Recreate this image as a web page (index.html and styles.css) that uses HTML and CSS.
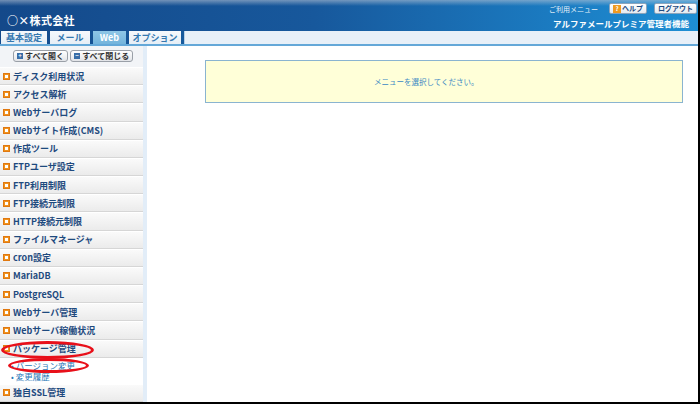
FILE: index.html
```html
<!DOCTYPE html>
<html lang="ja">
<head>
  <meta charset="UTF-8">
  <title>管理者機能</title>
  <link rel="stylesheet" href="styles.css">
</head>
<body>
<div class="page">

  <!-- header -->
  <div class="header">
    <div class="company">○×株式会社</div>
    <div class="header-right">
      <div class="user-menu">
        <span class="menu-label">ご利用メニュー</span>
        <a href="#" class="head-btn"><span class="help-icon">?</span>ヘルプ</a>
        <a href="#" class="head-btn">ログアウト</a>
      </div>
      <div class="product">アルファメールプレミア管理者機能</div>
    </div>
  </div>

  <!-- tabs -->
  <div class="tabs">
    <a href="#" class="tab">基本設定</a>
    <a href="#" class="tab">メール</a>
    <a href="#" class="tab active">Web</a>
    <a href="#" class="tab">オプション</a>
    <div class="tab-rest"></div>
  </div>

  <div class="content">
    <div class="sidebar">
      <div class="toolbar">
        <a href="#" class="tool-btn"><span class="tool-icon">+</span>すべて開く</a>
        <a href="#" class="tool-btn"><span class="tool-icon">−</span>すべて閉じる</a>
      </div>
      <a href="#" class="side-item"><span class="bullet"></span>ディスク利用状況</a>
      <a href="#" class="side-item"><span class="bullet"></span>アクセス解析</a>
      <a href="#" class="side-item"><span class="bullet"></span>Webサーバログ</a>
      <a href="#" class="side-item"><span class="bullet"></span>Webサイト作成(CMS)</a>
      <a href="#" class="side-item"><span class="bullet"></span>作成ツール</a>
      <a href="#" class="side-item"><span class="bullet"></span>FTPユーザ設定</a>
      <a href="#" class="side-item"><span class="bullet"></span>FTP利用制限</a>
      <a href="#" class="side-item"><span class="bullet"></span>FTP接続元制限</a>
      <a href="#" class="side-item"><span class="bullet"></span>HTTP接続元制限</a>
      <a href="#" class="side-item"><span class="bullet"></span>ファイルマネージャ</a>
      <a href="#" class="side-item"><span class="bullet"></span>cron設定</a>
      <a href="#" class="side-item"><span class="bullet"></span>MariaDB</a>
      <a href="#" class="side-item"><span class="bullet"></span>PostgreSQL</a>
      <a href="#" class="side-item"><span class="bullet"></span>Webサーバ管理</a>
      <a href="#" class="side-item"><span class="bullet"></span>Webサーバ稼働状況</a>
      <div class="group">
        <a href="#" class="side-item open"><span class="bullet"></span>パッケージ管理</a>
        <div class="sub-list">
          <a href="#" class="sub-item"><span class="dot">•</span>バージョン変更</a>
          <a href="#" class="sub-item"><span class="dot">•</span>変更履歴</a>
        </div>
        <!-- red annotation marks -->
        <span class="mark mark-group"></span>
        <span class="mark mark-sub"></span>
      </div>
      <a href="#" class="side-item"><span class="bullet"></span>独自SSL管理</a>
    </div>
    <div class="side-edge"></div>

    <div class="main">
      <div class="notice">メニューを選択してください。</div>
    </div>
  </div>

</div>
</body>
</html>
```

FILE: styles.css
```css
/* reset */
* {
  margin: 0;
  padding: 0;
  box-sizing: border-box;
}

body {
  font-family: "Noto Sans CJK JP", "Liberation Sans", sans-serif;
  background-color: #fff;
  width: 700px;
  height: 404px;
  overflow: hidden;
}

a {
  text-decoration: none;
}

.page {
  width: 700px;
  height: 404px;
  border-right: 2px solid #000;
  border-bottom: 2px solid #000;
  display: flex;
  flex-direction: column;
  overflow: hidden;
}

/* header */
.header {
  height: 31px;
  display: flex;
  justify-content: space-between;
  background:
    linear-gradient(to bottom, rgba(190, 200, 215, 0.55), rgba(190, 200, 215, 0) 6px),
    linear-gradient(to right, #14498a 0%, #17589c 45%, #1b7cc2 80%, #1e8fd4 100%);
  color: #fff;
}

.company {
  font-size: 11px;
  font-weight: bold;
  padding: 13px 0 0 7px;
  line-height: 14px;
  letter-spacing: 0.3px;
}

.header-right {
  display: flex;
  flex-direction: column;
  align-items: flex-end;
  padding: 3px 1px 0 0;
}

.user-menu {
  display: flex;
  align-items: center;
  height: 11px;
}

.menu-label {
  font-size: 7px;
  margin-right: 4px;
  color: #e8f2fa;
}

.head-btn {
  display: flex;
  align-items: center;
  height: 11px;
  padding: 0 3px;
  margin-left: 7px;
  background: linear-gradient(#ffffff, #e4eaf0);
  border: 1px solid #8aa4bc;
  border-radius: 2px;
  color: #1c4a80;
  font-size: 7px;
  font-weight: bold;
  line-height: 9px;
}

.help-icon {
  display: inline-block;
  width: 8px;
  height: 8px;
  background-color: #f09a20;
  color: #fff;
  font-size: 6px;
  line-height: 8px;
  text-align: center;
  margin-right: 1px;
}

.product {
  font-size: 8.5px;
  font-weight: bold;
  margin-top: 3px;
  line-height: 12px;
  padding-right: 8px;
}

/* tabs */
.tabs {
  display: flex;
  height: 15px;
  background: linear-gradient(to right, #14498a, #1b7cc2 80%, #1e8fd4);
  border-bottom: 2px solid #64a8d8;
  padding-left: 1px;
}

.tab {
  display: flex;
  align-items: center;
  justify-content: center;
  height: 13px;
  margin-right: 3px;
  background: linear-gradient(#f6f9fc, #e6eef6);
  color: #3478b0;
  font-size: 9px;
  font-weight: bold;
  line-height: 13px;
}

.tab:nth-child(1) { width: 46px; }
.tab:nth-child(2) { width: 40px; }
.tab:nth-child(3) { width: 33px; }
.tab:nth-child(4) { width: 52px; }

.tab.active {
  background: linear-gradient(#8ec6e6, #74b4dc);
  color: #fff;
}

.tab-rest {
  flex: 1;
  height: 13px;
  background-color: #e8f0f8;
  border-left: 1px solid #b8d0e6;
}

/* body area */
.content {
  flex: 1;
  display: flex;
  min-height: 0;
}

.sidebar {
  width: 143px;
  background-color: #f2f4f7;
  display: flex;
  flex-direction: column;
}

.side-edge {
  width: 4px;
  background-color: #e2edf8;
}

.toolbar {
  height: 21px;
  display: flex;
  align-items: center;
  padding-left: 13px;
  gap: 2px;
}

.tool-btn {
  display: flex;
  align-items: center;
  height: 12px;
  padding: 0 3px 0 3px;
  border: 1px solid #9aa0a8;
  border-radius: 3px;
  background: linear-gradient(#ffffff, #e2e4e8);
  color: #333;
  font-size: 8px;
  font-weight: bold;
  line-height: 10px;
}

.tool-icon {
  display: inline-block;
  width: 6px;
  height: 6px;
  background-color: #3a6ea8;
  color: #fff;
  font-size: 6px;
  line-height: 6px;
  text-align: center;
  margin-right: 2px;
}

.side-item {
  display: flex;
  align-items: center;
  height: 18.2px;
  padding-left: 3px;
  background: linear-gradient(#fafafa, #ebebeb);
  border-top: 1px solid #fff;
  border-bottom: 1px solid #d6d6d6;
  color: #1e4a7e;
  font-size: 9px;
  font-weight: bold;
  white-space: nowrap;
}

.bullet {
  width: 7px;
  height: 7px;
  background-color: #f0921c;
  border: 1px solid #e07810;
  margin-right: 3px;
  position: relative;
}

.bullet::after {
  content: "";
  position: absolute;
  left: 1px;
  top: 1px;
  width: 3px;
  height: 3px;
  background-color: #fff;
}

.group {
  position: relative;
}

.sub-list {
  background-color: #fff;
  padding: 2px 0 2px 0;
}

.sub-item {
  display: flex;
  align-items: center;
  height: 11px;
  padding-left: 11px;
  color: #2a78b8;
  font-size: 8.5px;
  white-space: nowrap;
}

.dot {
  font-size: 8px;
  margin-right: 2px;
  color: #2a78b8;
}

.mark {
  position: absolute;
  border: 3px solid #e8101a;
  border-radius: 50%;
}

.mark-group {
  left: 1px;
  top: 1px;
  width: 93px;
  height: 18px;
}

.mark-sub {
  left: 8px;
  top: 18px;
  width: 81px;
  height: 15px;
}

/* main */
.main {
  flex: 1;
  padding: 14px 15px 0 58px;
  background-color: #fff;
}

.notice {
  height: 43px;
  background-color: #ffffd8;
  border: 1px solid #8ab4d0;
  color: #3a88c4;
  font-size: 7.5px;
  line-height: 41px;
  padding-left: 168px;
}
```
